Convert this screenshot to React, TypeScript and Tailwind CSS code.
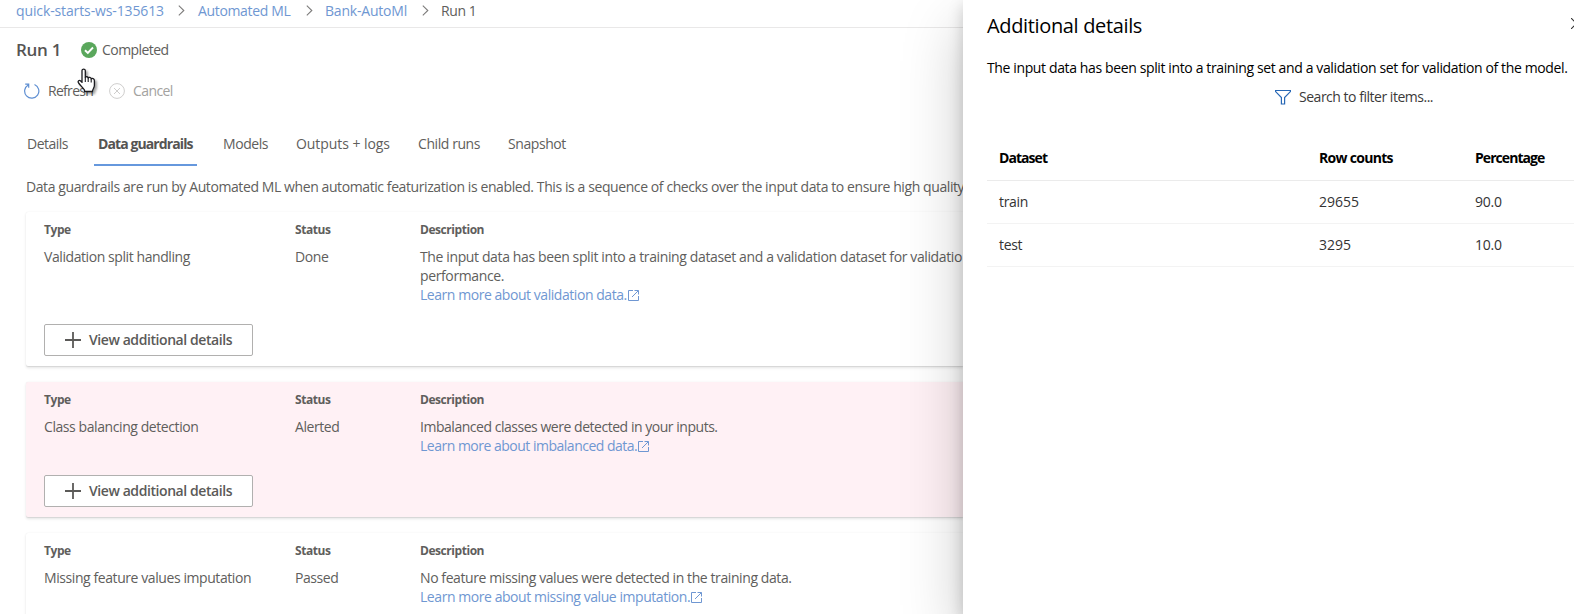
import type { ReactNode } from "react";

function Chevron() {
  return (
    <svg className="mt-px h-[11px] w-[7px] shrink-0" viewBox="0 0 7 11" fill="none" stroke="#7d7c7b" strokeWidth="1.1">
      <path d="M0.8 0.7 5.8 5.5 0.8 10.3" />
    </svg>
  );
}

function ExternalIcon() {
  return (
    <svg className="mt-px ml-px h-[11px] w-[11px] shrink-0" viewBox="0 0 11 11" fill="none" stroke="#6f97d2" strokeWidth="1">
      <path d="M5 .5H.5v10h10V6M6.500 .5h4v4M10.300 .7 4 7" />
    </svg>
  );
}

function Cursor() {
  return (
    <svg className="absolute top-[68px] left-[77px] z-10 h-[28px] w-[22px] drop-shadow-[2px_2px_1px_rgba(0,0,0,0.35)]" viewBox="0 0 22 28">
      <path
        d="M5 2.500C5 .6 8.200 .6 8.300 2.500V9.500C8.700 8.300 11 8.500 11.200 10 11.800 8.900 14 9.300 14.200 10.900 15 10 17.400 10.600 17.400 12.700V17.500C17.400 19.500 16 21 15.500 22.800V23.500H7.500V22C6 19.800 3.500 17.500 1.600 15 .3 13 2.300 11.700 3.700 13L5 14.400Z"
        fill="#fff"
        stroke="#1b1b1f"
        strokeWidth="1.300"
        strokeLinejoin="round"
      />
      <path d="M8.300 9.500v4.500M11.200 10v4M14.200 11v3.500" stroke="#1b1b1f" strokeWidth="1.100" fill="none" />
    </svg>
  );
}

function ViewButton() {
  return (
    <button className="flex h-8 w-[209px] items-center rounded-[2px] border border-[#b1b0af] bg-white pl-5 text-[14px] font-semibold tracking-[-0.42px] text-[#5b5a58]">
      <svg className="mr-[8px] h-4 w-4" viewBox="0 0 16 16" stroke="#5b5a58" strokeWidth="1.800">
        <path d="M8 0v16M0 8h16" />
      </svg>
      <span className="pb-px">View additional details</span>
    </button>
  );
}

type CardProps = {
  type: string;
  status: string;
  lines: string[];
  lineStyle: string;
  link: string;
  linkStyle: string;
  alerted?: boolean;
  children?: ReactNode;
};

function GuardrailCard({ type, status, lines, lineStyle, link, linkStyle, alerted, children }: CardProps) {
  return (
    <section
      className={`flex flex-col rounded-l-[2px] pt-[9px] pb-[10px] pl-[18px] shadow-[0_1.6px_3px_rgba(0,0,0,0.1),0_0.3px_0.9px_rgba(0,0,0,0.08)] ${alerted ? "bg-[#fff1f5]" : "bg-white"}`}
    >
      <div className="grid grid-cols-[252px_125px_1fr] text-[12px] leading-[18px] font-bold tracking-[-0.45px] text-[#605e5c]">
        <span>Type</span>
        <span className="-ml-px">Status</span>
        <span className="-ml-px">Description</span>
      </div>
      <div className="mt-[8px] mb-px grid grid-cols-[252px_125px_1fr] leading-[19px]">
        <span>{type}</span>
        <span className="-ml-px">{status}</span>
        <div className="-ml-px">
          {lines.map((line) => (
            <p key={line} className={lineStyle}>
              {line}
            </p>
          ))}
          <a className={`flex items-center text-[#6f97d2] ${linkStyle}`}>
            {link}
            <ExternalIcon />
          </a>
        </div>
      </div>
      <div className="mt-[19px] h-8">{children}</div>
    </section>
  );
}

const tabs = [
  { label: "Details", style: "w-[71px] tracking-[-0.5px]" },
  { label: "Models", style: "w-[73px]" },
  { label: "Outputs + logs", style: "w-[122px] tracking-[-0.06px]" },
  { label: "Child runs", style: "w-[90px]" },
  { label: "Snapshot", style: "" },
];

const rows = [
  ["train", "29655", "90.0"],
  ["test", "3295", "10.0"],
];

export default function App() {
  return (
    <div className="flex h-[614px] w-[1574px] overflow-hidden bg-white font-['Open_Sans','Noto_Sans',sans-serif] text-[14px] tracking-[-0.42px] whitespace-nowrap text-[#605e5c]">
      <main className="relative flex w-[963px] shrink-0 flex-col overflow-hidden">
        <nav className="flex h-[28px] shrink-0 items-center border-b border-[#e9e8e8] pb-[7px] pl-[16px] text-[#6f97d2]">
          <span className="w-[162px] tracking-[-0.12px]">quick-starts-ws-135613</span>
          <Chevron />
          <span className="ml-[13px] w-[108px] tracking-[-0.34px]">Automated ML</span>
          <Chevron />
          <span className="ml-[12px] w-[97px] tracking-[-0.200px]">Bank-AutoMl</span>
          <Chevron />
          <span className="ml-[12px] text-[#605e5c]">Run 1</span>
        </nav>

        <div className="flex h-[44px] shrink-0 items-center pl-[16px]">
          <h1 className="w-[65px] text-[17px] font-semibold tracking-[-0.3px] text-[#555453]">Run 1</h1>
          <svg className="h-4 w-4" viewBox="0 0 16 16">
            <circle cx="8" cy="8" r="8" fill="#5aa75c" />
            <path d="M4 8.300 6.800 11 12 5.500" fill="none" stroke="#fff" strokeWidth="1.900" />
          </svg>
          <span className="ml-[5px] pb-px tracking-[-0.55px]">Completed</span>
        </div>

        <div className="flex h-[38px] shrink-0 items-center pl-[24px]">
          <svg className="h-4 w-4" viewBox="0 0 16 16" fill="none" stroke="#5f8fd2" strokeWidth="1.200">
            <path d="M10.500 1.500A7.100 7.100 0 1 1 4.200 1.900M1.200 1.200H4.700V4.700" />
          </svg>
          <span className="ml-[8px] w-[61px] pb-px tracking-[-0.7px]">Refresh</span>
          <svg className="h-4 w-4" viewBox="0 0 16 16" fill="none" stroke="#cfcecd" strokeWidth="1">
            <circle cx="8" cy="8" r="7.400" />
            <path d="m5 5 6 6m0-6-6 6" />
          </svg>
          <span className="ml-[8px] pb-px tracking-[-0.6px] text-[#a3a2a0]">Cancel</span>
        </div>
        <Cursor />

        <div className="mt-[14px] flex h-[42px] shrink-0 items-stretch pl-[27px] leading-[39px]">
          <span className={tabs[0].style}>{tabs[0].label}</span>
          <span className="mr-[26px] -ml-[4px] w-[103px] border-b-2 border-[#6698dd] pl-[4px] font-bold tracking-[-0.9px] text-[#555453]">
            Data guardrails
          </span>
          {tabs.slice(1).map((tab) => (
            <span key={tab.label} className={tab.style}>
              {tab.label}
            </span>
          ))}
        </div>

        <p className="mt-[11px] shrink-0 pl-[26px] leading-[20px] tracking-[-0.408px]">
          Data guardrails are run by Automated ML when automatic featurization is enabled. This is a sequence of checks over the input data to ensure high quality
        </p>

        <div className="mt-[15px] flex flex-col gap-[16px] pl-[26px]">
          <GuardrailCard
            type="Validation split handling"
            status="Done"
            lines={[
              "The input data has been split into a training dataset and a validation dataset for validatio",
              "performance.",
            ]}
            lineStyle="tracking-[-0.376px]"
            link="Learn more about validation data."
            linkStyle="tracking-[-0.45px]"
          >
            <ViewButton />
          </GuardrailCard>
          <GuardrailCard
            type="Class balancing detection"
            status="Alerted"
            lines={["Imbalanced classes were detected in your inputs."]}
            lineStyle="tracking-[-0.47px]"
            link="Learn more about imbalanced data."
            linkStyle="tracking-[-0.5px]"
            alerted
          >
            <ViewButton />
          </GuardrailCard>
          <GuardrailCard
            type="Missing feature values imputation"
            status="Passed"
            lines={["No feature missing values were detected in the training data."]}
            lineStyle="tracking-[-0.41px]"
            link="Learn more about missing value imputation."
            linkStyle="tracking-[-0.44px]"
          />
        </div>
      </main>

      <aside className="relative flex flex-1 flex-col bg-white pl-[24px] text-[#111] shadow-[0_25.6px_57.6px_rgba(0,0,0,0.22),0_4.8px_14.4px_rgba(0,0,0,0.18)]">
        <div className="flex h-[52px] shrink-0 items-center justify-between">
          <h2 className="text-[20px] tracking-[-0.35px] text-black">Additional details</h2>
          <svg className="-mt-[6px] -mr-[8px] h-[11px] w-[11px]" viewBox="0 0 11 11" stroke="#333" strokeWidth="1.100">
            <path d="m0 0 11 11M11 0 0 11" />
          </svg>
        </div>
        <p className="mt-[6px] leading-[20px] tracking-[-0.374px] text-black">
          The input data has been split into a training set and a validation set for validation of the model.
        </p>
        <div className="mt-[9px] flex h-[20px] items-center pl-[288px] text-[#3b3a39]">
          <svg className="mr-[8px] h-4 w-4" viewBox="0 0 16 16" fill="none" stroke="#2767b5" strokeWidth="1.200">
            <path d="M.6 1.500H15.400V2.600L9.600 8.500V15H6.400V8.500L.6 2.600Z" />
          </svg>
          <span className="pb-px tracking-[-0.48px]">Search to filter items...</span>
        </div>

        <div className="mt-[29px] grid h-[45px] shrink-0 grid-cols-[320px_156px_1fr] items-center border-b border-[#ebebeb] pb-px pl-[12px] font-bold tracking-[-0.95px] text-black">
          <span>Dataset</span>
          <span className="tracking-[-0.7px]">Row counts</span>
          <span>Percentage</span>
        </div>
        {rows.map((row) => (
          <div
            key={row[0]}
            className="grid h-[43px] shrink-0 grid-cols-[320px_156px_1fr] items-center border-b border-[#f3f3f3] pb-[2px] pl-[12px] tracking-normal text-[#333]"
          >
            <span className="tracking-[-0.3px]">{row[0]}</span>
            <span>{row[1]}</span>
            <span className="tracking-[-0.200px]">{row[2]}</span>
          </div>
        ))}
      </aside>
    </div>
  );
}
